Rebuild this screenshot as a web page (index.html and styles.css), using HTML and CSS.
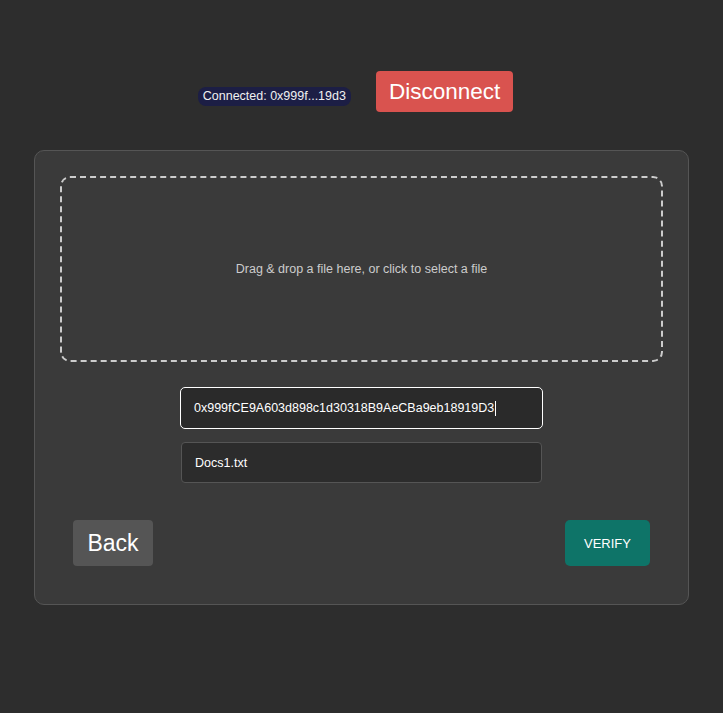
FILE: index.html
```
<!DOCTYPE html>
<html>
<head>
<meta charset="utf-8">
<link rel="stylesheet" href="styles.css">
</head>
<body>
<div class="header">
  <span class="badge">Connected: 0x999f...19d3</span>
  <button class="disconnect">Disconnect</button>
</div>
<div class="card">
  <div class="dropzone">Drag &amp; drop a file here, or click to select a file</div>
  <div class="fields">
    <div class="field focused">0x999fCE9A603d898c1d30318B9AeCBa9eb18919D3<span class="caret"></span></div>
    <div class="field">Docs1.txt</div>
  </div>
  <div class="actions">
    <button class="back">Back</button>
    <button class="verify">VERIFY</button>
  </div>
</div>
</body>
</html>
```
FILE: styles.css
```
html, body {
  margin: 0;
  padding: 0;
  background: #2d2d2d;
  font-family: "Liberation Sans", Arial, sans-serif;
  height: 100%;
}
.header {
  display: flex;
  justify-content: center;
  align-items: baseline;
  gap: 25px;
  padding-top: 71px;
  padding-right: 12px;
  height: 41px;
}
.badge {
  background: #1c1e45;
  color: #f0f0f0;
  font-size: 12.5px;
  line-height: 19px;
  height: 19px;
  padding: 0 5px;
  border-radius: 8px;
  position: relative;
  top: 1px;
}
.disconnect {
  background: #d9534f;
  color: #fff;
  border: none;
  font-family: "Liberation Sans", Arial, sans-serif;
  font-size: 22.5px;
  height: 41px;
  padding: 0 13px;
  border-radius: 4px;
}
.card {
  margin: 38px 34px 0 34px;
  background: #3a3a3a;
  border: 1px solid #555;
  border-radius: 10px;
  padding: 25px;
  height: 403px;
}
.dropzone {
  height: 182px;
  border: 2px dashed #ccc;
  border-radius: 10px;
  display: flex;
  align-items: center;
  justify-content: center;
  color: #ccc;
  font-size: 12.5px;
}
.fields {
  display: flex;
  flex-direction: column;
  align-items: center;
  margin-top: 25px;
  gap: 13px;
}
.field {
  box-sizing: border-box;
  width: 361px;
  height: 41px;
  background: #2c2c2c;
  border: 1px solid #555;
  border-radius: 4px;
  color: #fff;
  font-size: 12.5px;
  display: flex;
  align-items: center;
  padding-left: 13px;
}
.field.focused {
  width: 363px;
  height: 42px;
  border: 1px solid #fff;
  border-radius: 5px;
  background: #2a2a2a;
}
.caret {
  display: inline-block;
  width: 1px;
  height: 15px;
  background: #fff;
  margin-left: 1px;
}
.actions {
  display: flex;
  justify-content: space-between;
  margin: 37px 13px 0 13px;
}
.back {
  background: #555;
  color: #fff;
  border: none;
  font-family: "Liberation Sans", Arial, sans-serif;
  font-size: 23px;
  height: 46px;
  width: 80px;
  border-radius: 4px;
}
.verify {
  background: #0e7468;
  color: #fff;
  border: none;
  font-family: "Liberation Sans", Arial, sans-serif;
  font-size: 13px;
  height: 46px;
  width: 85px;
  border-radius: 5px;
}
```
